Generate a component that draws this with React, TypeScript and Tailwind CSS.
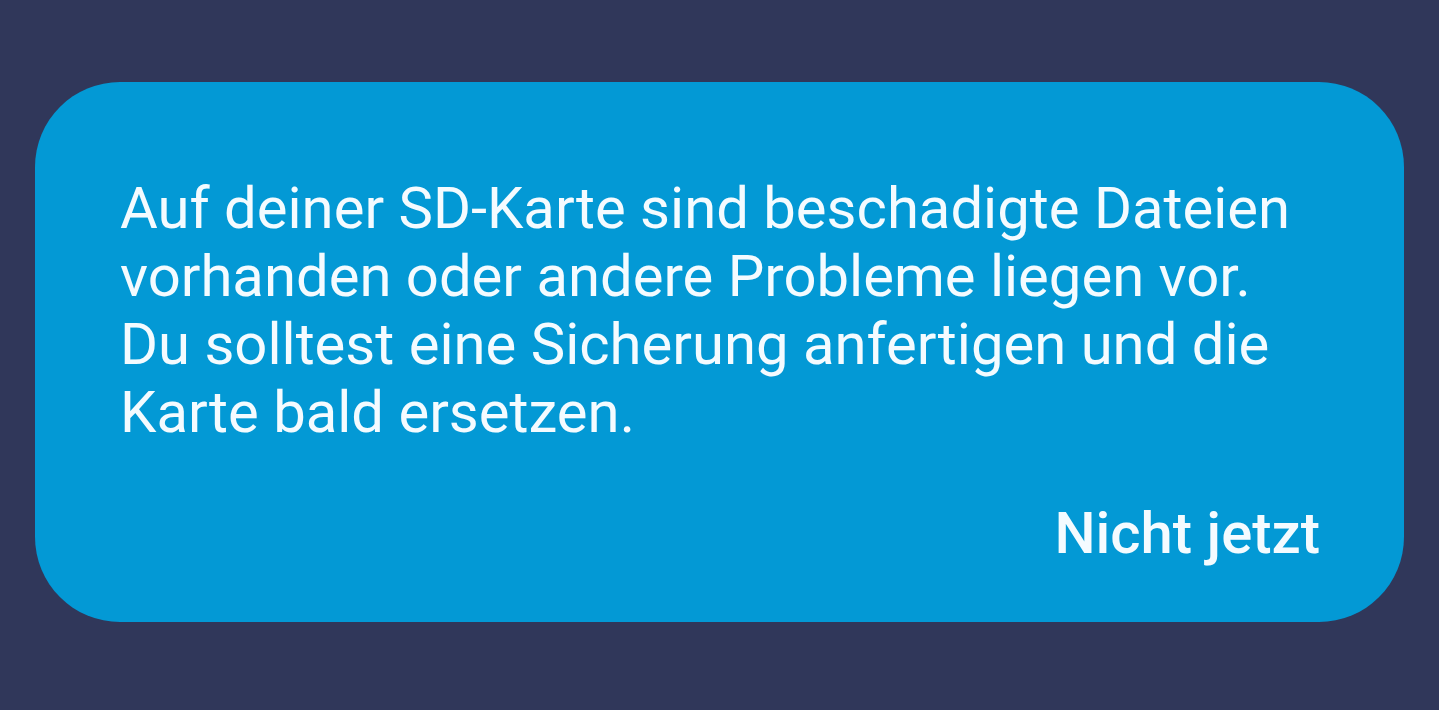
export default function App() {
  return (
    <div className="flex h-[710px] w-full items-start bg-[#30375a] px-[35px] pt-[82px] font-['Roboto',sans-serif]">
      <div className="flex h-[540px] w-full flex-col rounded-[85px] bg-[#0399d5] pl-[85px] pr-[84px] pt-[92px] text-[#f4fbff]">
        <p className="text-[58px] leading-[68px]">
          Auf deiner SD-Karte sind beschadigte Dateien
          <br />
          vorhanden oder andere Probleme liegen vor.
          <br />
          Du solltest eine Sicherung anfertigen und die
          <br />
          Karte bald ersetzen.
        </p>
        <div className="mt-[53px] flex justify-end">
          <button className="text-[58px] font-medium leading-[68px]">Nicht jetzt</button>
        </div>
      </div>
    </div>
  );
}
